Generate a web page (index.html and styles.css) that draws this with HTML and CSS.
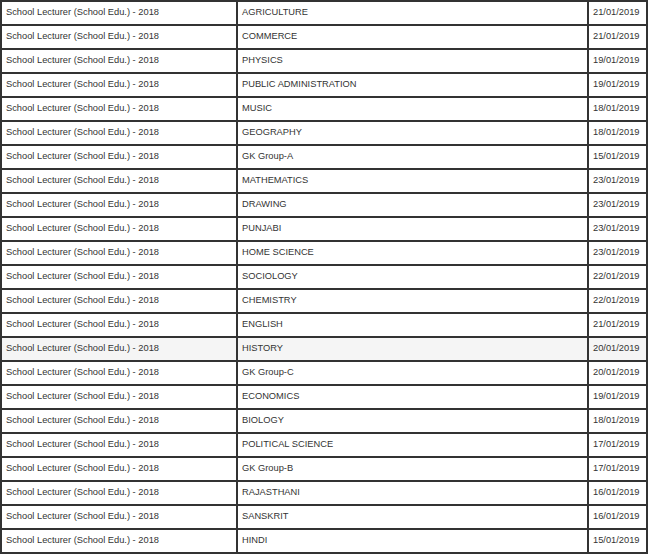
FILE: index.html
```html
<!DOCTYPE html>
<html>
<head>
<meta charset="utf-8">
<link rel="stylesheet" href="styles.css">
</head>
<body>
<table class="exam-table">
  <colgroup>
    <col class="c-exam">
    <col class="c-subject">
    <col class="c-date">
  </colgroup>
  <tbody>
    <tr><td>School Lecturer (School Edu.) - 2018</td><td>AGRICULTURE</td><td>21/01/2019</td></tr>
    <tr><td>School Lecturer (School Edu.) - 2018</td><td>COMMERCE</td><td>21/01/2019</td></tr>
    <tr><td>School Lecturer (School Edu.) - 2018</td><td>PHYSICS</td><td>19/01/2019</td></tr>
    <tr><td>School Lecturer (School Edu.) - 2018</td><td>PUBLIC ADMINISTRATION</td><td>19/01/2019</td></tr>
    <tr><td>School Lecturer (School Edu.) - 2018</td><td>MUSIC</td><td>18/01/2019</td></tr>
    <tr><td>School Lecturer (School Edu.) - 2018</td><td>GEOGRAPHY</td><td>18/01/2019</td></tr>
    <tr><td>School Lecturer (School Edu.) - 2018</td><td>GK Group-A</td><td>15/01/2019</td></tr>
    <tr><td>School Lecturer (School Edu.) - 2018</td><td>MATHEMATICS</td><td>23/01/2019</td></tr>
    <tr><td>School Lecturer (School Edu.) - 2018</td><td>DRAWING</td><td>23/01/2019</td></tr>
    <tr><td>School Lecturer (School Edu.) - 2018</td><td>PUNJABI</td><td>23/01/2019</td></tr>
    <tr><td>School Lecturer (School Edu.) - 2018</td><td>HOME SCIENCE</td><td>23/01/2019</td></tr>
    <tr><td>School Lecturer (School Edu.) - 2018</td><td>SOCIOLOGY</td><td>22/01/2019</td></tr>
    <tr><td>School Lecturer (School Edu.) - 2018</td><td>CHEMISTRY</td><td>22/01/2019</td></tr>
    <tr><td>School Lecturer (School Edu.) - 2018</td><td>ENGLISH</td><td>21/01/2019</td></tr>
    <tr class="is-hover"><td>School Lecturer (School Edu.) - 2018</td><td>HISTORY</td><td>20/01/2019</td></tr>
    <tr><td>School Lecturer (School Edu.) - 2018</td><td>GK Group-C</td><td>20/01/2019</td></tr>
    <tr><td>School Lecturer (School Edu.) - 2018</td><td>ECONOMICS</td><td>19/01/2019</td></tr>
    <tr><td>School Lecturer (School Edu.) - 2018</td><td>BIOLOGY</td><td>18/01/2019</td></tr>
    <tr><td>School Lecturer (School Edu.) - 2018</td><td>POLITICAL SCIENCE</td><td>17/01/2019</td></tr>
    <tr><td>School Lecturer (School Edu.) - 2018</td><td>GK Group-B</td><td>17/01/2019</td></tr>
    <tr><td>School Lecturer (School Edu.) - 2018</td><td>RAJASTHANI</td><td>16/01/2019</td></tr>
    <tr><td>School Lecturer (School Edu.) - 2018</td><td>SANSKRIT</td><td>16/01/2019</td></tr>
    <tr><td>School Lecturer (School Edu.) - 2018</td><td>HINDI</td><td>15/01/2019</td></tr>
  </tbody>
</table>
</body>
</html>
```
FILE: styles.css
```css
html, body {
  margin: 0;
  padding: 0;
  background: #fff;
}
body {
  font-family: "Liberation Sans", Arial, sans-serif;
  font-size: 9.3px;
  color: #333;
  overflow: hidden;
}
.exam-table {
  width: 648px;
  table-layout: fixed;
  border-collapse: separate;
  border-spacing: 2px;
  background: #333;
}
.c-exam { width: 234px; }
.c-subject { width: 349px; }
.c-date { width: 57px; }
.exam-table td {
  box-sizing: border-box;
  height: 22px;
  padding: 0 0 3px 4px;
  background: #fff;
  vertical-align: middle;
  white-space: nowrap;
  overflow: hidden;
}
.exam-table tr.is-hover td {
  background: #f5f5f5;
}
```
